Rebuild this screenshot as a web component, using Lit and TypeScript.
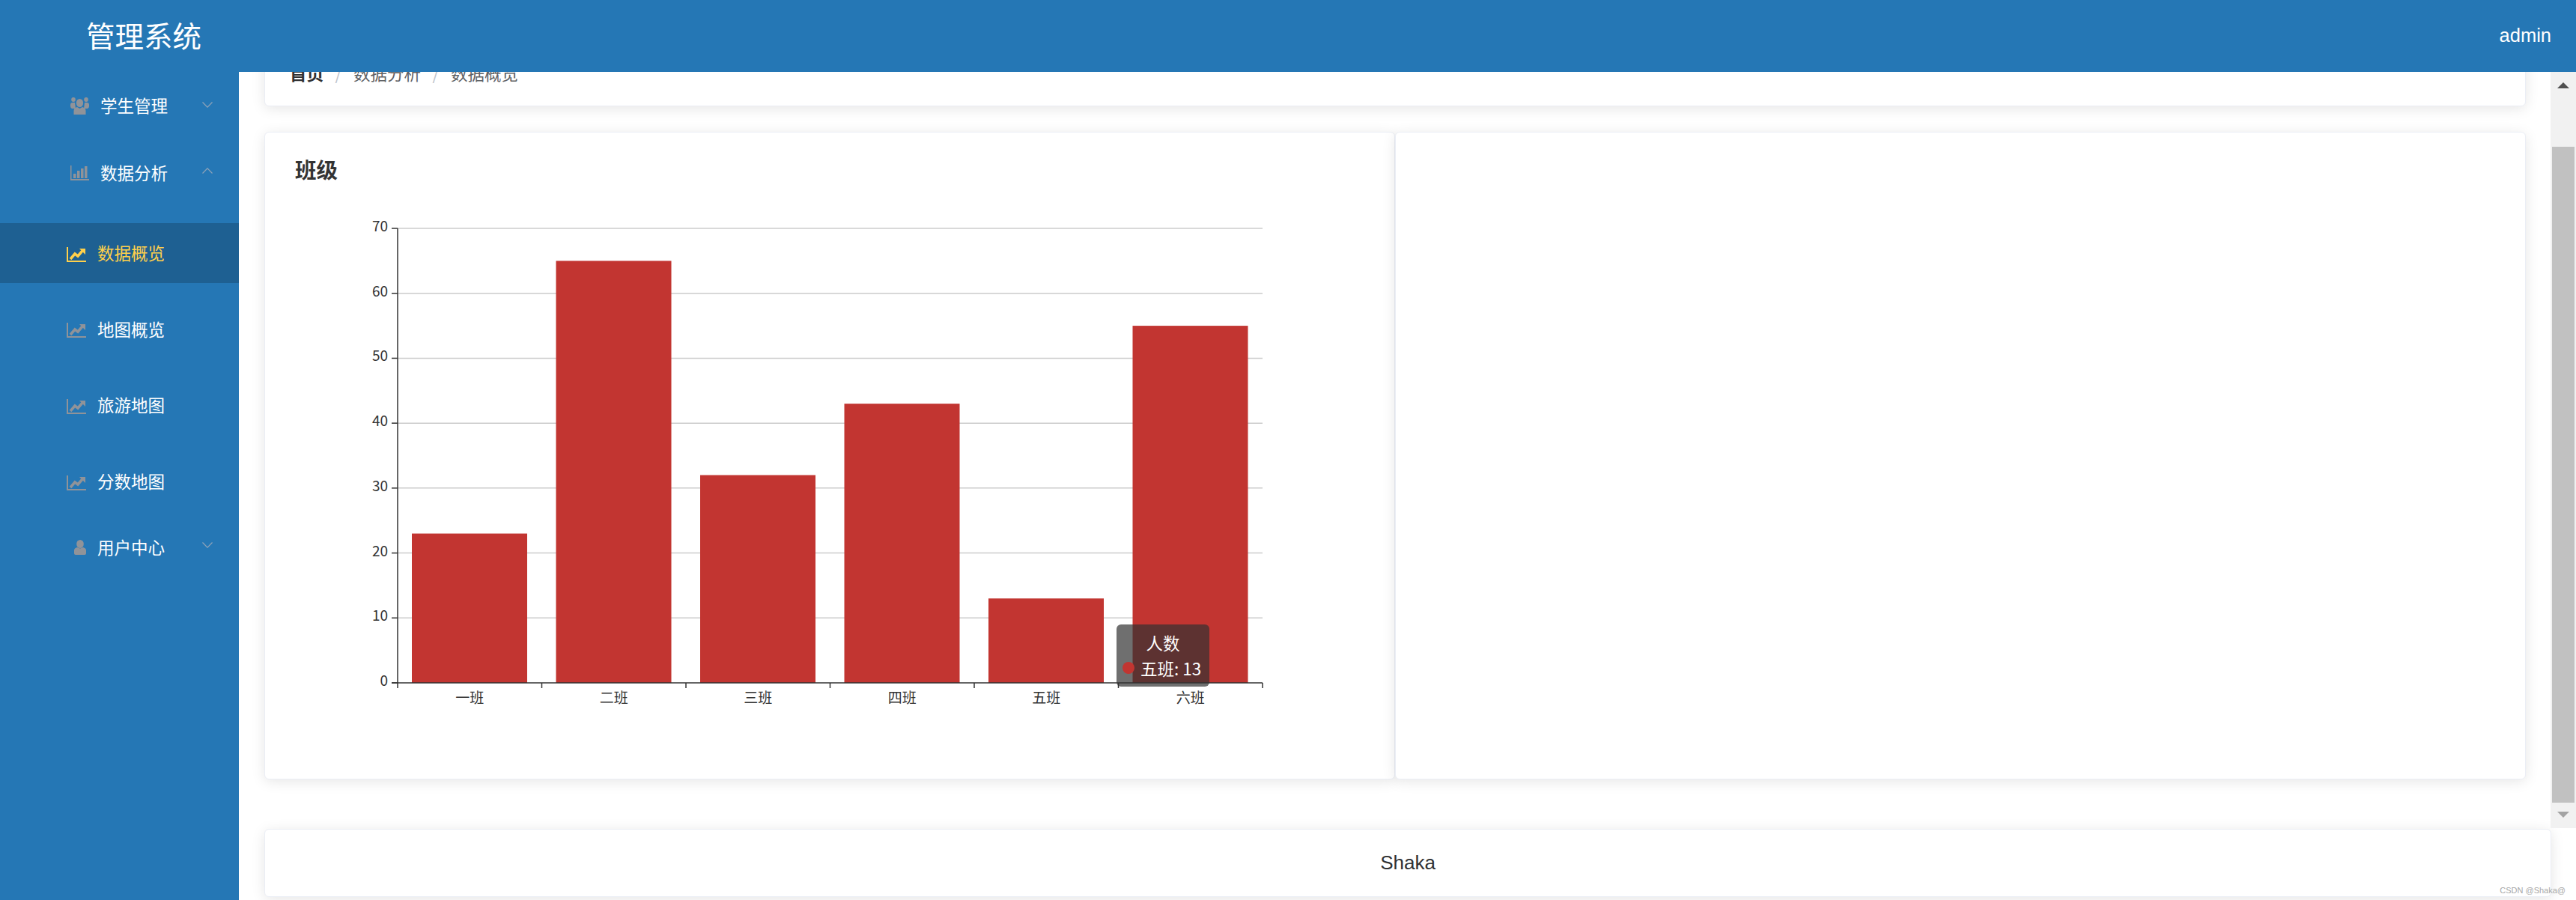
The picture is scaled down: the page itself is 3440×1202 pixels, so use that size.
import { LitElement, html, css, svg } from "lit";
import { customElement } from "lit/decorators.js";

const trendIcon = html`<svg class="ic trend" width="26" height="20" viewBox="0 0 26 20"><path d="M1 0v19h25" fill="none" stroke="currentColor" stroke-width="2"/><path d="M5 16l6-7 4 3 6-7" fill="none" stroke="currentColor" stroke-width="3.500"/><path d="M17 2h8v8z" fill="currentColor"/></svg>`;
const groupIcon = html`<svg class="ic" width="25" height="23" viewBox="0 0 25 23" fill="currentColor"><ellipse cx="4" cy="3" rx="2.800" ry="3"/><ellipse cx="21" cy="3" rx="2.800" ry="3"/><path d="M0 10q0-3 3-3h3l1 8H2q-2-1-2-3zM25 10q0-3-3-3h-3l-1 8h5q2-1 2-3z"/><ellipse cx="12.500" cy="7.500" rx="4.600" ry="5.500"/><path d="M4.500 23v-5q0-4 4.500-5l3.500 2 3.500-2q4.500 1 4.500 5v5z"/></svg>`;
const barIcon = html`<svg class="ic" width="25" height="20" viewBox="0 0 25 20" fill="currentColor"><path d="M0 0h1.500v18H25v2H0z"/><path d="M4 11h3.500v6H4zM9 7h3.500v10H9zM14 4h3.500v13H14zM19 1h3.500v16H19z"/></svg>`;
const userIcon = html`<svg class="ic" width="16" height="20" viewBox="0 0 16 20" fill="currentColor"><ellipse cx="8" cy="5.500" rx="4.800" ry="5.500"/><path d="M0 14q0-3 4-4l4 1.500 4-1.500q4 1 4 4v4q0 2-2 2H2q-2 0-2-2z"/></svg>`;
const chevron = (up: boolean, cls: string) => html`<svg class="chev ${cls}" width="14" height="8" viewBox="0 0 14 8"><path d="${up ? "M.5 7.500L7 .8l6.500 6.700" : "M.5.500L7 7.200 13.500.500"}" fill="none" stroke="currentColor" stroke-width="1.200"/></svg>`;

const values = [23, 65, 32, 43, 13, 55];
const names = ["一班", "二班", "三班", "四班", "五班", "六班"];
const X0 = 137; // axis x inside the chart
const Y0 = 632; // axis y inside the chart
const STEP_X = 192.5;
const UNIT = 8.671;

@customElement("app-chart")
class AppChart extends LitElement {
  static styles = css`
    :host { display: block; position: relative; width: 1320px; height: 700px; }
    svg { display: block; }
    text { font-family: "Noto Sans CJK SC", "Noto Sans", sans-serif; font-size: 19px; fill: #333; }
    .tip {
      position: absolute; left: 1097px; top: 554px; width: 124px; height: 83px;
      box-sizing: border-box; padding: 7px 8px 0; border-radius: 6px;
      background: rgba(50, 50, 50, 0.7); color: #fff; font-size: 22.500px; line-height: 34px;
      font-family: "Noto Sans CJK SC", "Noto Sans", sans-serif;
    }
    .tip-head { text-align: center; }
    .tip-row { display: flex; align-items: center; gap: 8px; white-space: nowrap; }
    .dot { width: 16px; height: 16px; border-radius: 50%; background: #c23531; flex: none; }
  `;
  render() {
    const grid = Array.from({ length: 8 }, (_, i) => i * 10);
    return html`
      <svg width="1320" height="700" viewBox="0 0 1320 700">
        ${grid.map((v) => {
          const y = Y0 - v * UNIT;
          return svg`
            ${v > 0 ? svg`<line x1="${X0}" x2="${X0 + STEP_X * 6}" y1="${y}" y2="${y}" stroke="#ccc" stroke-width="1.500"/>` : ""}
            <line x1="${X0 - 8}" x2="${X0}" y1="${y}" y2="${y}" stroke="#333" stroke-width="1.500"/>
            <text x="${X0 - 13}" y="${y + 4}" text-anchor="end">${v}</text>`;
        })}
        ${values.map((v, i) => svg`<rect x="${X0 + STEP_X * i + 19}" y="${Y0 - v * UNIT}" width="154" height="${v * UNIT}" fill="#c23531"/>`)}
        <line x1="${X0}" x2="${X0}" y1="${Y0 - 70 * UNIT}" y2="${Y0 + 7}" stroke="#333" stroke-width="1.500"/>
        <line x1="${X0 - 8}" x2="${X0 + STEP_X * 6}" y1="${Y0}" y2="${Y0}" stroke="#333" stroke-width="1.500"/>
        ${names.map((n, i) => svg`
          <line x1="${X0 + STEP_X * (i + 1)}" x2="${X0 + STEP_X * (i + 1)}" y1="${Y0}" y2="${Y0 + 7}" stroke="#333" stroke-width="1.500"/>
          <text x="${X0 + STEP_X * i + STEP_X / 2}" y="${Y0 + 27}" text-anchor="middle">${n}</text>`)}
      </svg>
      <div class="tip">
        <div class="tip-head">人数</div>
        <div class="tip-row"><span class="dot"></span><span>五班: 13</span></div>
      </div>`;
  }
}

@customElement("app-root")
class AppRoot extends LitElement {
  static styles = css`
    :host {
      display: flex; flex-direction: column; width: 3440px; height: 1202px; overflow: hidden;
      background: #fff; position: relative;
      font-family: "Noto Sans CJK SC", "Noto Sans", sans-serif;
    }
    .header {
      height: 96px; flex: none; background: #2577b5; color: #fff; display: flex;
      align-items: center; justify-content: space-between; padding: 0 33px 0 115px;
      position: relative; z-index: 2;
    }
    .logo { font-size: 38.500px; line-height: 92px; margin-bottom: 4px; }
    .admin { font-family: "Liberation Sans", Arial, sans-serif; font-size: 25.500px; margin-top: -2px; }
    .body { flex: 1; display: flex; min-height: 0; }
    .side { width: 319px; flex: none; background: #2577b5; color: #fff; font-size: 22.500px; }
    .row { display: flex; align-items: center; height: 90px; padding-right: 35px; color: #fff; }
    .label { margin-top: -2px; }
    .ic { color: #909399; flex: none; }
    .trend { margin-top: 3px; }
    .chev { color: #8fa3b8; margin-left: auto; flex: none; }
    .chev.a { margin-top: -2px; }
    .chev.b { margin-top: -7px; }
    .chev.c { margin-top: -6px; }
    .slot { width: 25px; margin-left: 94px; margin-right: 15px; display: flex; justify-content: center; }
    .row.user .slot { margin-right: 11px; }
    .sub { display: flex; flex-direction: column; gap: 21.700px; padding: 22px 0 3px; }
    .item { display: flex; align-items: center; gap: 15px; height: 80px; padding-left: 89px; }
    .item.active { background: #1e6092; color: #ffd04b; }
    .item.active .ic { color: #ffd04b; }
    .right { flex: 1; display: flex; flex-direction: column; min-width: 0; }
    .top { height: 1010px; flex: none; display: flex; }
    .scroll { flex: 1; min-width: 0; overflow: hidden; padding: 0 33px 0 34px; }
    .card {
      box-sizing: border-box; background: #fff; border: 1px solid #ebeef5; border-radius: 6px;
      box-shadow: 0 3px 18px rgba(0, 0, 0, 0.1);
    }
    .crumb {
      height: 86px; margin-top: -40px; padding: 28px 30px 32px 33px; display: flex; align-items: center; gap: 14px;
      font-size: 22.500px; color: #606266; line-height: 24px;
    }
    .crumb b { color: #303133; font-weight: 700; }
    .sep { color: #c0c4cc; width: 12px; text-align: center; font-weight: 400; }
    .cards { display: flex; margin-top: 34px; }
    .panel { flex: 1; height: 865px; padding: 28px 0 0 40px; }
    .title { font-size: 28.500px; font-weight: 700; color: #333; line-height: 42px; margin-bottom: 33px; }
    .bar {
      width: 34px; flex: none; background: #f1f1f1; display: flex; flex-direction: column;
      align-items: center; position: relative; z-index: 1;
    }
    .arrow { width: 0; height: 0; border-left: 8px solid transparent; border-right: 8px solid transparent; }
    .up { border-bottom: 8px solid #505050; margin-top: 14px; }
    .thumb { width: 30px; height: 876px; background: #c1c1c1; margin-top: 78px; }
    .down { border-top: 8px solid #a3a3a3; margin-top: 12px; }
    .foot {
      margin-left: 34px; width: 3054px; height: 91px; margin-top: 1px; display: flex; align-items: center;
      justify-content: center; font-family: "Liberation Sans", Arial, sans-serif; font-size: 26px; color: #303133;
      flex: none; position: relative; z-index: 0;
    }
    .mark {
      position: absolute; right: 14px; bottom: 7px; font-size: 11px; color: #a8a8a8; z-index: 3;
      font-family: "Liberation Sans", Arial, sans-serif; white-space: nowrap;
    }
  `;
  render() {
    return html`
      <div class="header">
        <div class="logo">管理系统</div>
        <div class="admin">admin</div>
      </div>
      <div class="body">
        <nav class="side">
          <div class="row"><span class="slot">${groupIcon}</span><span class="label">学生管理</span>${chevron(false, "a")}</div>
          <div class="row"><span class="slot">${barIcon}</span><span class="label">数据分析</span>${chevron(true, "b")}</div>
          <div class="sub">
            <div class="item active">${trendIcon}<span class="label">数据概览</span></div>
            <div class="item">${trendIcon}<span class="label">地图概览</span></div>
            <div class="item">${trendIcon}<span class="label">旅游地图</span></div>
            <div class="item">${trendIcon}<span class="label">分数地图</span></div>
          </div>
          <div class="row user"><span class="slot">${userIcon}</span><span class="label">用户中心</span>${chevron(false, "c")}</div>
        </nav>
        <div class="right">
          <div class="top">
            <div class="scroll">
              <div class="card crumb">
                <b>首页</b><span class="sep">/</span><span>数据分析</span><span class="sep">/</span><span>数据概览</span>
              </div>
              <div class="cards">
                <section class="card panel">
                  <div class="title">班级</div>
                  <app-chart></app-chart>
                </section>
                <section class="card panel"></section>
              </div>
            </div>
            <div class="bar">
              <span class="arrow up"></span>
              <span class="thumb"></span>
              <span class="arrow down"></span>
            </div>
          </div>
          <footer class="card foot">Shaka</footer>
        </div>
      </div>
      <div class="mark">CSDN @Shaka@</div>
    `;
  }
}
